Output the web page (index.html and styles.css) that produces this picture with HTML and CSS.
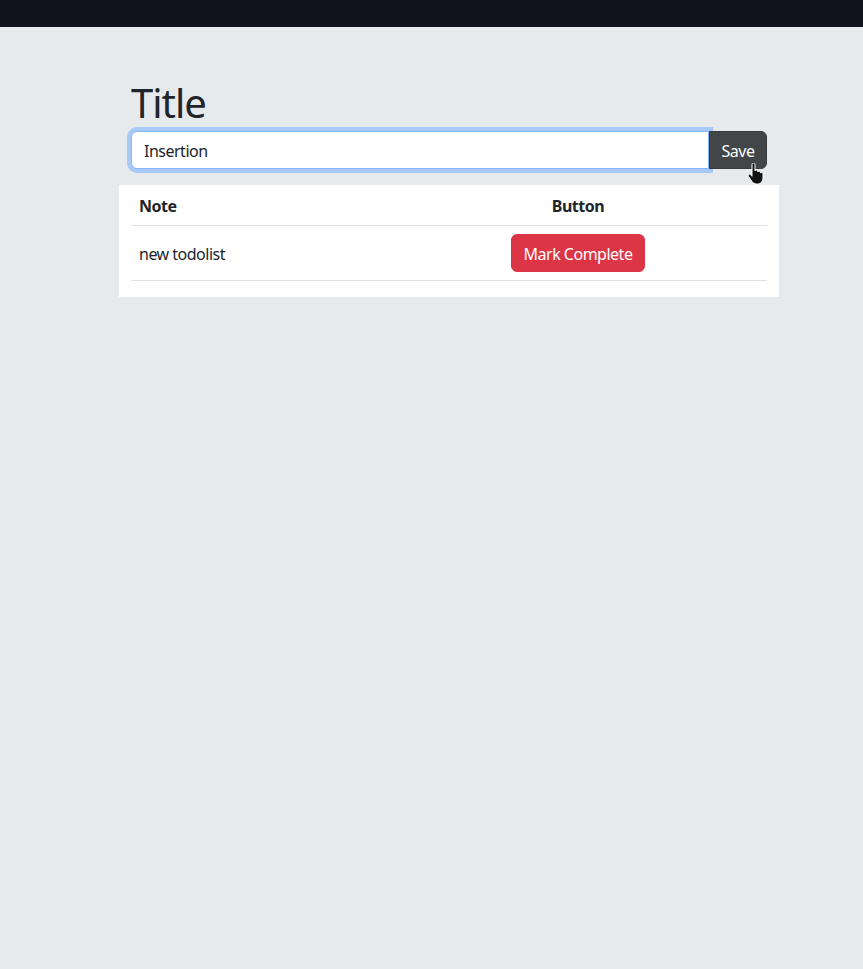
FILE: index.html
```html
<!DOCTYPE html>
<html>
<head>
<meta charset="utf-8">
<link rel="stylesheet" href="styles.css">
</head>
<body>
<div class="topbar"></div>
<main class="container">
  <h1 class="title">Title</h1>
  <div class="input-group">
    <input class="form-control" type="text" value="Insertion">
    <button class="btn btn-save">Save</button>
    <svg class="cursor" width="18" height="22" viewBox="0 0 18 22">
      <path d="M5 1.5c0-.9.7-1.5 1.5-1.5S8 .6 8 1.5V8c.2-.6.8-1 1.4-1 .8 0 1.4.6 1.4 1.4v.6c.2-.5.7-.9 1.3-.9.8 0 1.4.6 1.4 1.4v.6c.2-.4.7-.7 1.2-.7.8 0 1.3.6 1.3 1.4V15c0 3.3-2.4 6-5.6 6H9.5c-1.9 0-3.4-.9-4.5-2.4L1.5 13.4c-.5-.7-.3-1.6.4-2 .6-.4 1.4-.3 1.9.3L5 13.3V1.5z" fill="#111" stroke="#fff" stroke-width="1"/>
    </svg>
  </div>
  <div class="card">
    <table class="table">
      <thead>
        <tr><th class="col-note">Note</th><th class="col-btn">Button</th></tr>
      </thead>
      <tbody>
        <tr><td>new todolist</td><td class="col-btn"><button class="btn btn-danger">Mark Complete</button></td></tr>
      </tbody>
    </table>
  </div>
</main>
</body>
</html>
```

FILE: styles.css
```css
* { box-sizing: border-box; }
html, body { margin: 0; padding: 0; }
body {
  background: #e7eaed;
  font-family: "Noto Sans", "Open Sans", sans-serif;
  font-size: 16px;
  line-height: 1.5;
  letter-spacing: -0.5px;
  color: #212529;
  height: 969px;
}
.topbar {
  height: 27px;
  background: #11121b;
}
.container {
  width: 660px;
  margin-left: 119px;
  padding: 0;
}
.title {
  font-size: 40px;
  font-weight: 400;
  line-height: 1.2;
  letter-spacing: -1px;
  margin: 52px 12px 4px;
  padding: 0;
}
.input-group {
  position: relative;
  display: flex;
  margin: 0 12px 16px;
}
.form-control {
  flex: 1;
  height: 38px;
  padding: 7px 12px 5px;
  font: inherit;
  letter-spacing: inherit;
  color: #212529;
  background: #fff;
  border: 1px solid #86b7fe;
  border-radius: 6px 0 0 6px;
  box-shadow: 0 0 0 4px #a8c8f6;
  outline: none;
  position: relative;
  z-index: 1;
}
.btn {
  font: inherit;
  letter-spacing: inherit;
  line-height: 1.5;
  border: 1px solid transparent;
  padding: 7px 12px 5px;
  border-radius: 6px;
  cursor: pointer;
}
.btn-save {
  background: #424649;
  border-color: #373b3e;
  color: #fff;
  border-radius: 0 6px 6px 0;
  height: 38px;
  width: 58px;
  padding: 7px 0 5px;
  position: relative;
  z-index: 2;
}
.cursor {
  position: absolute;
  left: 616px;
  top: 32px;
  z-index: 3;
}
.card {
  background: #fff;
  padding: 0 12px 16px;
}
.table {
  width: 100%;
  border-collapse: collapse;
}
.table th, .table td {
  padding: 9px 8px 7px;
  border-bottom: 1px solid #dee2e6;
  text-align: left;
  vertical-align: middle;
}
.table td { padding: 8px; }
.table td:first-child { padding: 9px 8px 7px; }
.table th { font-weight: 700; }
.col-note { width: 258px; }
.table .col-btn { text-align: center; }
.btn-danger {
  background: #dc3545;
  color: #fff;
  border-color: #dc3545;
  height: 38px;
}
```
